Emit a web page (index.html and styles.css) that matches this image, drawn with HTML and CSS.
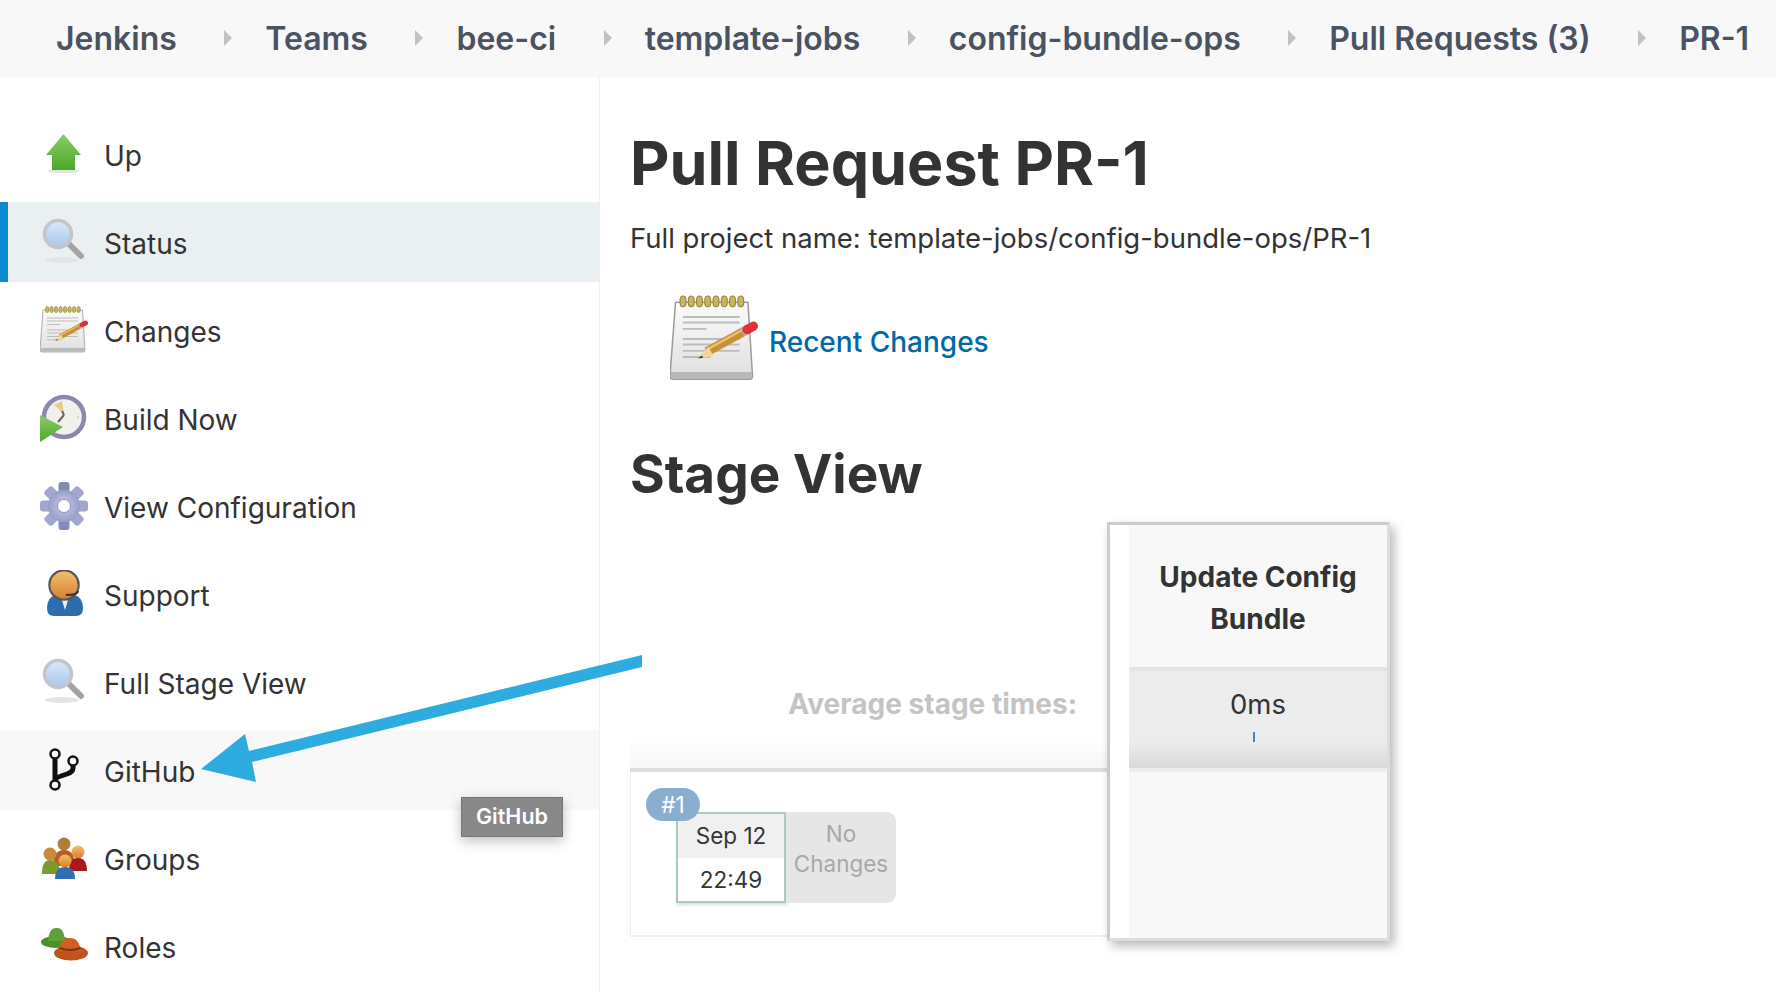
FILE: index.html
```html
<!DOCTYPE html>
<html lang="en">
<head>
    <meta charset="UTF-8">
    <meta name="viewport" content="width=device-width, initial-scale=1.0">
    <title>config-bundle-ops » PR-1 [Jenkins]</title>
    <link rel="stylesheet" href="styles.css">
</head>
<body>
    <svg class="defs" width="0" height="0">
        <defs>
            <linearGradient id="lens" x1="0" y1="0" x2="0" y2="1"><stop offset="0" stop-color="#dce8f7"/><stop offset="1" stop-color="#a7c8ec"/></linearGradient>
            <linearGradient id="green" x1="0" y1="0" x2="0" y2="1"><stop offset="0" stop-color="#8ccb6c"/><stop offset="1" stop-color="#4ca926"/></linearGradient>
            <linearGradient id="paper" x1="0" y1="0" x2="0" y2="1"><stop offset="0" stop-color="#fbfbfb"/><stop offset="1" stop-color="#dfdfdf"/></linearGradient>
            <linearGradient id="skin" x1="0" y1="0" x2="0" y2="1"><stop offset="0" stop-color="#f4bd6e"/><stop offset="1" stop-color="#d7812c"/></linearGradient>
            <radialGradient id="cog"><stop offset="0" stop-color="#c9cce6"/><stop offset="1" stop-color="#979dc9"/></radialGradient>
            <symbol id="magnifier" viewBox="0 0 48 48">
                <ellipse cx="22" cy="42" rx="17" ry="3" fill="#e4e4e4"/>
                <path d="M29 26 L41 38" stroke="#a4a4a4" stroke-width="6" stroke-linecap="round"/>
                <circle cx="18" cy="16" r="13.5" fill="url(#lens)" stroke="#c4c4cc" stroke-width="3.5"/>
            </symbol>
            <symbol id="notepad" viewBox="0 0 48 48">
                <path d="M3 4 H42.500 L45 44 Q45 46 43 46 H2 Q0 46 0 44 Z" fill="url(#paper)" stroke="#9a9a9a" stroke-width=".8"/>
                <path d="M.5 42 H44.500 V45 Q44.500 45.500 43 45.500 H2 Q.5 45.500 .5 45 Z" fill="#b9b9b9"/>
                <g fill="#c9b65c" stroke="#8a7a30" stroke-width=".5">
                    <rect x="5.500" y=".5" width="3.200" height="6" rx="1.600"/>
                    <rect x="10" y=".5" width="3.200" height="6" rx="1.600"/>
                    <rect x="14.500" y=".5" width="3.200" height="6" rx="1.600"/>
                    <rect x="19" y=".5" width="3.200" height="6" rx="1.600"/>
                    <rect x="23.500" y=".5" width="3.200" height="6" rx="1.600"/>
                    <rect x="28" y=".5" width="3.200" height="6" rx="1.600"/>
                    <rect x="32.500" y=".5" width="3.200" height="6" rx="1.600"/>
                    <rect x="37" y=".5" width="3.200" height="6" rx="1.600"/>
                </g>
                <path d="M7 12 H38 M7 15 H38 M7 18.500 H20 M7 24 H38 M7 27 H38 M7 30.500 H38 M7 33.800 H22" stroke="#bcbcbc" stroke-width="1"/>
                <path d="M20 31 L41 19.500" stroke="#c98f38" stroke-width="5"/>
                <path d="M20 29.800 L40 18.800" stroke="#ecc16e" stroke-width="1.300"/>
                <path d="M21 28.300 L23.800 33.400 L15 34.500 Z" fill="#eed7a4"/>
                <path d="M15 34.500 L17.500 33 L18 34.300 Z" fill="#4a3a20"/>
                <path d="M39.500 20.300 L42.500 18.600" stroke="#b7b7b7" stroke-width="5"/>
                <path d="M42 18.900 L45.500 17" stroke="#e0303a" stroke-width="5" stroke-linecap="round"/>
            </symbol>
        </defs>
    </svg>

    <nav class="breadcrumbs">
        <a>Jenkins</a><span class="sep"></span>
        <a>Teams</a><span class="sep"></span>
        <a>bee-ci</a><span class="sep"></span>
        <a>template-jobs</a><span class="sep"></span>
        <a>config-bundle-ops</a><span class="sep"></span>
        <a>Pull Requests (3)</a><span class="sep"></span>
        <a>PR-1</a>
    </nav>

    <div class="page">
        <aside class="sidebar">
            <a class="task">
                <svg class="icon" viewBox="0 0 48 48">
                    <ellipse cx="23.500" cy="41" rx="16" ry="2" fill="#e2e2e2"/>
                    <path d="M23.500 4 L41 25 H35 V40 H12 V25 H6 Z" fill="url(#green)"/>
                </svg>
                Up
            </a>
            <a class="task active">
                <svg class="icon"><use href="#magnifier"/></svg>
                Status
            </a>
            <a class="task">
                <svg class="icon"><use href="#notepad"/></svg>
                Changes
            </a>
            <a class="task">
                <svg class="icon" viewBox="0 0 48 48">
                    <circle cx="24" cy="23" r="20" fill="#f1f0ec" stroke="#8c87ad" stroke-width="4.500"/>
                    <path d="M24 20 L14 11 L22 7 Z" fill="#e3cf86"/>
                    <path d="M24 21 L18 28 M24 21 L22 17" stroke="#666" stroke-width="2"/>
                    <circle cx="38" cy="23" r="1" fill="#ccc"/>
                    <path d="M0 21 L23 33 L0 48 Z" fill="url(#green)"/>
                </svg>
                Build Now
            </a>
            <a class="task">
                <svg class="icon" viewBox="0 0 48 48">
                    <g fill="#a2a7d1">
                        <rect x="18.500" y="0" width="11" height="48" rx="3" fill="#7f8cb6"/>
                        <rect x="18.500" y="0" width="11" height="48" rx="3" transform="rotate(45 24 24)"/>
                        <rect x="18.500" y="0" width="11" height="48" rx="3" transform="rotate(90 24 24)"/>
                        <rect x="18.500" y="0" width="11" height="48" rx="3" transform="rotate(135 24 24)"/>
                        <circle cx="24" cy="24" r="16" fill="url(#cog)"/>
                    </g>
                    <circle cx="24" cy="24" r="6.500" fill="#fff" stroke="#8b96bd" stroke-width="1"/>
                </svg>
                View Configuration
            </a>
            <a class="task">
                <svg class="icon" viewBox="0 0 48 48">
                    <path d="M7 38 Q7 27 16 25 H34 Q43 27 43 38 Q43 46 36 46 H14 Q7 46 7 38 Z" fill="#2d6cae"/>
                    <path d="M21 27 H29 L25 40 Z" fill="#e8eef5"/>
                    <circle cx="24" cy="15" r="14.500" fill="none" stroke="#555" stroke-width="2.500"/>
                    <circle cx="24" cy="15" r="13.500" fill="url(#skin)"/>
                    <path d="M38 21 Q38 25 26 25" fill="none" stroke="#333" stroke-width="2"/>
                </svg>
                Support
            </a>
            <a class="task">
                <svg class="icon"><use href="#magnifier"/></svg>
                Full Stage View
            </a>
            <a class="task hover">
                <svg class="icon" viewBox="0 0 48 48">
                    <path d="M15 13 V34 M33 20 V22 Q33 26 27 28 L21 30 Q15 32 15 35" fill="none" stroke="#111" stroke-width="5"/>
                    <g fill="none" stroke="#111" stroke-width="2.500">
                        <circle cx="15" cy="8" r="4.500"/>
                        <circle cx="33" cy="15" r="4.500"/>
                        <circle cx="15" cy="39" r="4.500"/>
                    </g>
                </svg>
                GitHub
            </a>
            <a class="task">
                <svg class="icon" viewBox="0 0 48 48">
                    <circle cx="24" cy="10" r="6.500" fill="#b27c3b"/>
                    <path d="M13 32 Q13 16 24 16 Q35 16 35 32 Z" fill="#b4601f"/>
                    <circle cx="10" cy="20" r="6.500" fill="#c9893f"/>
                    <path d="M2 40 Q2 26 10 26 Q20 26 20 40 Z" fill="#7c9a2c"/>
                    <circle cx="38" cy="18" r="6.500" fill="url(#skin)"/>
                    <path d="M29 37 Q29 24 38 24 Q47 24 47 37 Z" fill="#a81a1a"/>
                    <circle cx="25" cy="27" r="6.500" fill="url(#skin)"/>
                    <path d="M15 45 Q15 33 25 33 Q35 33 35 45 Z" fill="#2f70b5"/>
                </svg>
                Groups
            </a>
            <a class="task">
                <svg class="icon" viewBox="0 0 48 48">
                    <ellipse cx="16" cy="20" rx="15" ry="6" fill="#4f8f2a"/>
                    <path d="M8 19 Q9 6 16 6 Q24 5 25 19 Z" fill="#5fa136"/>
                    <ellipse cx="31" cy="31" rx="17" ry="7.500" fill="#c2531c"/>
                    <path d="M19 29 Q21 15 30 16 Q39 16 41 29 Z" fill="#cf5f22"/>
                    <path d="M19.500 26 Q30 30 40.500 26" fill="none" stroke="#7a3311" stroke-width="2"/>
                </svg>
                Roles
            </a>
        </aside>

        <main class="content">
            <h1>Pull Request PR-1</h1>
            <p class="full-name">Full project name: template-jobs/config-bundle-ops/PR-1</p>
            <div class="recent">
                <svg class="recent-icon"><use href="#notepad"/></svg>
                <a>Recent Changes</a>
            </div>
            <h2>Stage View</h2>

            <div class="stage-view">
                <div class="stage-left">
                    <div class="avg-row"><span>Average stage times:</span></div>
                    <div class="builds">
                        <div class="build">
                            <span class="build-badge">#1</span>
                            <div class="build-date">
                                <div class="date-top">Sep 12</div>
                                <div class="date-bottom">22:49</div>
                            </div>
                            <div class="build-changes">No Changes</div>
                        </div>
                    </div>
                </div>
                <div class="stage-col">
                    <div class="stage-inner">
                        <div class="stage-head">Update Config Bundle</div>
                        <div class="stage-avg">
                            <span>0ms</span>
                            <i class="tick"></i>
                        </div>
                        <div class="stage-cell"></div>
                    </div>
                </div>
            </div>
        </main>
    </div>

    <div class="tooltip">GitHub</div>

    <svg class="callout" width="1776" height="992" viewBox="0 0 1776 992">
        <path d="M642 655 L642 667 L252 762 L256 782 L201 769 L245 734 L249 751 Z" fill="#2eabdf"/>
    </svg>
</body>
</html>
```

FILE: styles.css
```css
* {
    box-sizing: border-box;
}
html, body {
    margin: 0;
    height: 992px;
    overflow: hidden;
}
body {
    position: relative;
    font-family: Inter, "Liberation Sans", sans-serif;
    font-size: 28px;
    color: #333;
    background-color: #fff;
}
.defs {
    position: absolute;
}

/* top bar */
.breadcrumbs {
    display: flex;
    align-items: center;
    height: 78px;
    padding: 0 0 2px 56px;
    background-color: #f8f8f8;
    color: #4a5361;
    font-size: 32px;
    font-weight: 600;
    white-space: nowrap;
}
.sep {
    width: 0;
    height: 0;
    margin: 0 33px 0 47.500px;
    border-left: 8px solid #c2c2c2;
    border-top: 8px solid transparent;
    border-bottom: 8px solid transparent;
}

.page {
    display: flex;
    height: 914px;
}

/* side panel */
.sidebar {
    flex: 0 0 600px;
    padding-top: 36px;
    border-right: 1px solid #f0f0f0;
}
.task {
    display: flex;
    align-items: center;
    gap: 16px;
    height: 80px;
    margin-bottom: 8px;
    padding: 3px 0 0 40px;
}
.task.active {
    margin-right: -1px;
    padding-left: 32px;
    border-left: 8px solid #0b8bd0;
    background-color: #eaeff2;
}
.task.hover {
    background-color: #f8f8f8;
}
.icon {
    flex: none;
    width: 48px;
    height: 48px;
    margin-top: -3px;
    filter: blur(.4px);
}

/* main area */
.content {
    flex: 1;
    padding: 49px 0 0 30px;
}
h1 {
    margin: 0;
    font-size: 61px;
    line-height: 72px;
    font-weight: 700;
}
.full-name {
    margin: 22px 0 0;
    font-size: 27.500px;
    line-height: 34px;
}
.recent {
    display: flex;
    align-items: center;
    gap: 11px;
    margin: 40px 0 0 40px;
}
.recent-icon {
    width: 88px;
    height: 88px;
    filter: blur(.4px);
}
.recent a {
    padding-top: 5px;
    color: #0069a5;
    font-weight: 500;
}
h2 {
    margin: 59px 0 0;
    font-size: 53px;
    line-height: 64px;
    font-weight: 700;
}

/* stage view */
.stage-view {
    display: flex;
    align-items: flex-start;
    margin-top: 16px;
}
.stage-left {
    width: 477px;
    padding-top: 146px;
}
.avg-row {
    display: flex;
    justify-content: flex-end;
    align-items: center;
    height: 104px;
    padding: 0 30px 28px 0;
    background: linear-gradient(to bottom, #fff 70%, #f7f7f7);
    border-bottom: 4px solid #ddd;
    color: #c4c4c4;
    font-weight: 700;
}
.builds {
    height: 165px;
    padding-top: 40px;
    border-left: 1px solid #eee;
    border-bottom: 2px solid #f0f0f0;
}
.build {
    position: relative;
    display: flex;
    margin-left: 45px;
    font-size: 22.500px;
}
.build-badge {
    position: absolute;
    left: -30px;
    top: -24px;
    width: 54px;
    height: 33px;
    border-radius: 17px;
    background-color: #8aaed0;
    color: #fff;
    text-align: center;
    line-height: 33px;
}
.build-date {
    width: 110px;
    height: 91px;
    border: 2px solid #a8cdb9;
    box-shadow: 1px 2px 3px rgba(0, 0, 0, .15);
    text-align: center;
}
.date-top {
    height: 44px;
    background-color: #f0f0f0;
    line-height: 44px;
}
.date-bottom {
    height: 43px;
    line-height: 44px;
}
.build-changes {
    width: 110px;
    height: 91px;
    padding: 7px 6px 0;
    border-radius: 0 9px 9px 0;
    background-color: #e6e6e6;
    color: #a8a8a8;
    text-align: center;
    line-height: 30px;
}
.stage-col {
    width: 283px;
    height: 419px;
    padding-left: 19px;
    border: 3px solid #ccc;
    border-right-color: #ddd;
    border-bottom-color: #ddd;
    box-shadow: 4px 5px 10px rgba(0, 0, 0, .28);
    background-color: #fff;
}
.stage-inner {
    height: 100%;
    background-color: #f8f8f8;
}
.stage-head {
    display: flex;
    align-items: center;
    justify-content: center;
    height: 142px;
    padding: 3px 20px 0;
    font-weight: 700;
    line-height: 42px;
    text-align: center;
}
.stage-avg {
    display: flex;
    flex-direction: column;
    align-items: center;
    height: 105px;
    padding-top: 16px;
    border-top: 4px solid #e4e4e4;
    background: linear-gradient(to bottom, #ececec 70%, #d8d8d8 96%, #ececec 96%);
    font-size: 27.500px;
}
.tick {
    width: 2px;
    height: 10px;
    margin: 11px 9px 0 0;
    background-color: #4a7fcf;
}

/* overlays */
.tooltip {
    position: absolute;
    left: 461px;
    top: 797px;
    width: 102px;
    height: 40px;
    border: 1px solid #777;
    background-color: #888;
    box-shadow: 0 4px 12px rgba(0, 0, 0, .25);
    color: #fff;
    font-size: 21.500px;
    font-weight: 600;
    line-height: 36px;
    text-align: center;
}
.callout {
    position: absolute;
    left: 0;
    top: 0;
    pointer-events: none;
}
```
